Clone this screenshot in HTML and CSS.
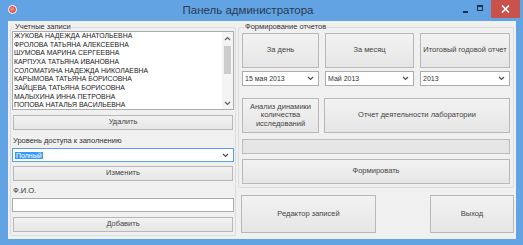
FILE: index.html
```html
<!DOCTYPE html>
<html lang="ru">
<head>
    <meta charset="UTF-8">
    <title>Панель администратора</title>
    <link rel="stylesheet" href="styles.css">
</head>
<body>

    <div class="window">

        <!-- Title bar -->
        <div class="titlebar">
            <span class="app-icon"></span>
            <span class="title">Панель администратора</span>
            <div class="controls">
                <span class="ctl minimize"></span>
                <span class="ctl maximize"></span>
                <span class="ctl close">
                    <svg width="9" height="8" viewBox="0 0 9 8"><path d="M1 0.5 L8 7.5 M8 0.5 L1 7.5" stroke="#fff" stroke-width="1.6"/></svg>
                </span>
            </div>
        </div>

        <div class="client">

            <!-- Accounts -->
            <fieldset class="group accounts">
                <legend>Учетные записи</legend>
                <div class="listbox">
                    <ul class="items">
                        <li>ЖУКОВА НАДЕЖДА АНАТОЛЬЕВНА</li>
                        <li>ФРОЛОВА ТАТЬЯНА АЛЕКСЕЕВНА</li>
                        <li>ШУМОВА МАРИНА СЕРГЕЕВНА</li>
                        <li>КАРПУХА ТАТЬЯНА ИВАНОВНА</li>
                        <li>СОЛОМАТИНА НАДЕЖДА НИКОЛАЕВНА</li>
                        <li>КАРЫМОВА ТАТЬЯНА БОРИСОВНА</li>
                        <li>ЗАЙЦЕВА ТАТЬЯНА БОРИСОВНА</li>
                        <li>МАЛЫХИНА ИННА ПЕТРОВНА</li>
                        <li>ПОПОВА НАТАЛЬЯ ВАСИЛЬЕВНА</li>
                    </ul>
                    <div class="scrollbar">
                        <svg class="arrow" width="7" height="5" viewBox="0 0 7 5"><path d="M1 4 L3.5 1.5 L6 4" fill="none" stroke="#606060" stroke-width="1.2"/></svg>
                        <div class="track"><div class="thumb"></div></div>
                        <svg class="arrow" width="7" height="5" viewBox="0 0 7 5"><path d="M1 1 L3.5 3.5 L6 1" fill="none" stroke="#606060" stroke-width="1.2"/></svg>
                    </div>
                </div>
                <button class="btn delete">Удалить</button>
                <label class="caption caption-level">Уровень доступа к заполнению</label>
                <div class="combo focused">
                    <span class="value"><span class="selected">Полный</span></span>
                    <svg width="7" height="5" viewBox="0 0 7 5"><path d="M1 1 L3.5 3.5 L6 1" fill="none" stroke="#505050" stroke-width="1.2"/></svg>
                </div>
                <button class="btn change">Изменить</button>
                <label class="caption caption-name">Ф.И.О.</label>
                <input type="text" class="textbox">
                <button class="btn add">Добавить</button>
            </fieldset>

            <div class="right">
                <!-- Reports -->
                <fieldset class="group reports">
                    <legend>Формирование отчетов</legend>
                    <div class="period-grid">
                        <button class="btn tall">За день</button>
                        <button class="btn tall">За месяц</button>
                        <button class="btn tall">Итоговый годовой отчет</button>
                        <div class="combo">
                            <span class="value">15 мая 2013</span>
                            <svg width="7" height="5" viewBox="0 0 7 5"><path d="M1 1 L3.5 3.5 L6 1" fill="none" stroke="#505050" stroke-width="1.2"/></svg>
                        </div>
                        <div class="combo">
                            <span class="value">Май 2013</span>
                            <svg width="7" height="5" viewBox="0 0 7 5"><path d="M1 1 L3.5 3.5 L6 1" fill="none" stroke="#505050" stroke-width="1.2"/></svg>
                        </div>
                        <div class="combo">
                            <span class="value">2013</span>
                            <svg width="7" height="5" viewBox="0 0 7 5"><path d="M1 1 L3.5 3.5 L6 1" fill="none" stroke="#505050" stroke-width="1.2"/></svg>
                        </div>
                    </div>
                    <div class="analysis-row">
                        <button class="btn tall analysis">Анализ динамики количества исследований</button>
                        <button class="btn tall lab">Отчет деятельности лаборатории</button>
                    </div>
                    <div class="progress"></div>
                    <button class="btn generate">Формировать</button>
                </fieldset>

                <div class="bottom-row">
                    <button class="btn editor">Редактор записей</button>
                    <button class="btn exit">Выход</button>
                </div>
            </div>

        </div>
    </div>

</body>
</html>
```

FILE: styles.css
```css
* {
    box-sizing: border-box;
}

body {
    margin: 0;
    padding: 0;
    background-color: #ffffff;
    font-family: "Liberation Sans", Arial, sans-serif;
}

/* Window frame */
.window {
    width: 523px;
    height: 245px;
    background-color: #62a3e4;
    padding: 0 7px 6px 8px;
    display: flex;
    flex-direction: column;
}

.titlebar {
    height: 21px;
    display: flex;
    align-items: flex-start;
}

.app-icon {
    width: 9px;
    height: 9px;
    margin-top: 5px;
    border-radius: 50%;
    border: 1px solid #ffffff;
    background: radial-gradient(circle at 45% 45%, #f4a0a0 0, #e0504a 55%, #c52a25 100%);
}

.title {
    flex: 1;
    text-align: center;
    font-size: 11.5px;
    line-height: 20px;
    color: #2a3a50;
    padding-left: 16px;
}

.controls {
    display: flex;
    align-items: flex-start;
    margin-right: -4px;
}

.ctl {
    display: block;
}

.minimize {
    width: 5px;
    height: 2px;
    background-color: #1f2f44;
    margin-top: 11px;
    margin-right: 9px;
}

.maximize {
    width: 6px;
    height: 6px;
    border: 1px solid #1f2f44;
    border-top-width: 2px;
    margin-top: 5px;
    margin-right: 8px;
}

.close {
    width: 29px;
    height: 18px;
    background-color: #c9524a;
    display: flex;
    align-items: center;
    justify-content: center;
}

/* Client area */
.client {
    flex: 1;
    background-color: #f0f0f0;
    display: flex;
    padding: 2px 0 0 2px;
    gap: 2px;
}

.group {
    margin: 0;
    border: 1px solid #dcdcdc;
    border-radius: 2px;
    min-inline-size: 0;
    display: flex;
    flex-direction: column;
}

.group legend {
    font-size: 7.5px;
    line-height: 8px;
    color: #333;
    padding: 0 1px;
    margin-left: 2px;
}

.accounts {
    width: 226px;
    height: 213px;
    padding: 0 1px 2px 1px;
}

.listbox {
    height: 79px;
    background-color: #ffffff;
    border: 1px solid #acacac;
    display: flex;
}

.items {
    list-style: none;
    margin: 0;
    padding: 0 0 0 1px;
    flex: 1;
    font-size: 6.9px;
    line-height: 8.65px;
    color: #1a1a1a;
}

.scrollbar {
    width: 11px;
    display: flex;
    flex-direction: column;
    align-items: center;
    background-color: #f4f4f4;
    padding: 4px 0 3px;
}

.scrollbar .track {
    flex: 1;
    width: 100%;
    padding: 5px 2px 0 2px;
}

.thumb {
    height: 28px;
    background-color: #cdcdcd;
}

.btn {
    display: block;
    font-family: "Liberation Sans", Arial, sans-serif;
    font-size: 7.5px;
    font-weight: normal;
    color: #444;
    background: linear-gradient(#f2f2f2, #e6e6e6);
    border: 1px solid #b8b8b8;
    padding: 0 2px;
    line-height: 1.15;
}

.delete,
.change,
.add {
    margin: 0 1px;
    height: 15px;
}

.delete {
    margin-top: 5px;
}

.caption {
    font-size: 7.5px;
    line-height: 9px;
    color: #333;
    margin-left: 1px;
}

.caption-level {
    margin-top: 6px;
}

.caption-name {
    margin-top: 5px;
}

.combo {
    height: 15px;
    background-color: #ffffff;
    border: 1px solid #acacac;
    display: flex;
    align-items: center;
    padding: 0 4px 0 2px;
    font-size: 7px;
    color: #333;
}

.combo .value {
    flex: 1;
}

.accounts .combo {
    height: 14px;
    margin-top: 3px;
}

.combo.focused {
    border-color: #5a9ee0;
}

.selected {
    background-color: #3399ff;
    color: #ffffff;
    padding: 0 1px;
}

.change {
    margin-top: 4px;
}

.textbox {
    height: 14px;
    margin: 3px 0 0 0;
    border: 1px solid #acacac;
    background-color: #ffffff;
}

.add {
    margin-top: 5px;
}

/* Right column */
.right {
    width: 277px;
    display: flex;
    flex-direction: column;
}

.reports {
    width: 276px;
    height: 165px;
    padding: 0 3px 3px 3px;
}

.period-grid {
    margin-top: 2px;
    display: grid;
    grid-template-columns: 77px 89px 90px;
    grid-template-rows: 35px 15px;
    column-gap: 6px;
    row-gap: 3px;
}

.tall {
    height: 35px;
}

.analysis-row {
    margin-top: 12px;
    display: flex;
    gap: 5px;
}

.analysis {
    width: 77px;
    padding: 0 4px;
}

.lab {
    flex: 1;
}

.progress {
    margin-top: 6px;
    height: 15px;
    background-color: #e6e6e6;
    border: 1px solid #bcbcbc;
}

.generate {
    margin-top: 5px;
    height: 25px;
}

.bottom-row {
    margin-top: 7px;
    display: flex;
    justify-content: space-between;
    padding: 0 1px 0 3px;
}

.editor {
    width: 135px;
    height: 38px;
}

.exit {
    width: 84px;
    height: 38px;
}
```
